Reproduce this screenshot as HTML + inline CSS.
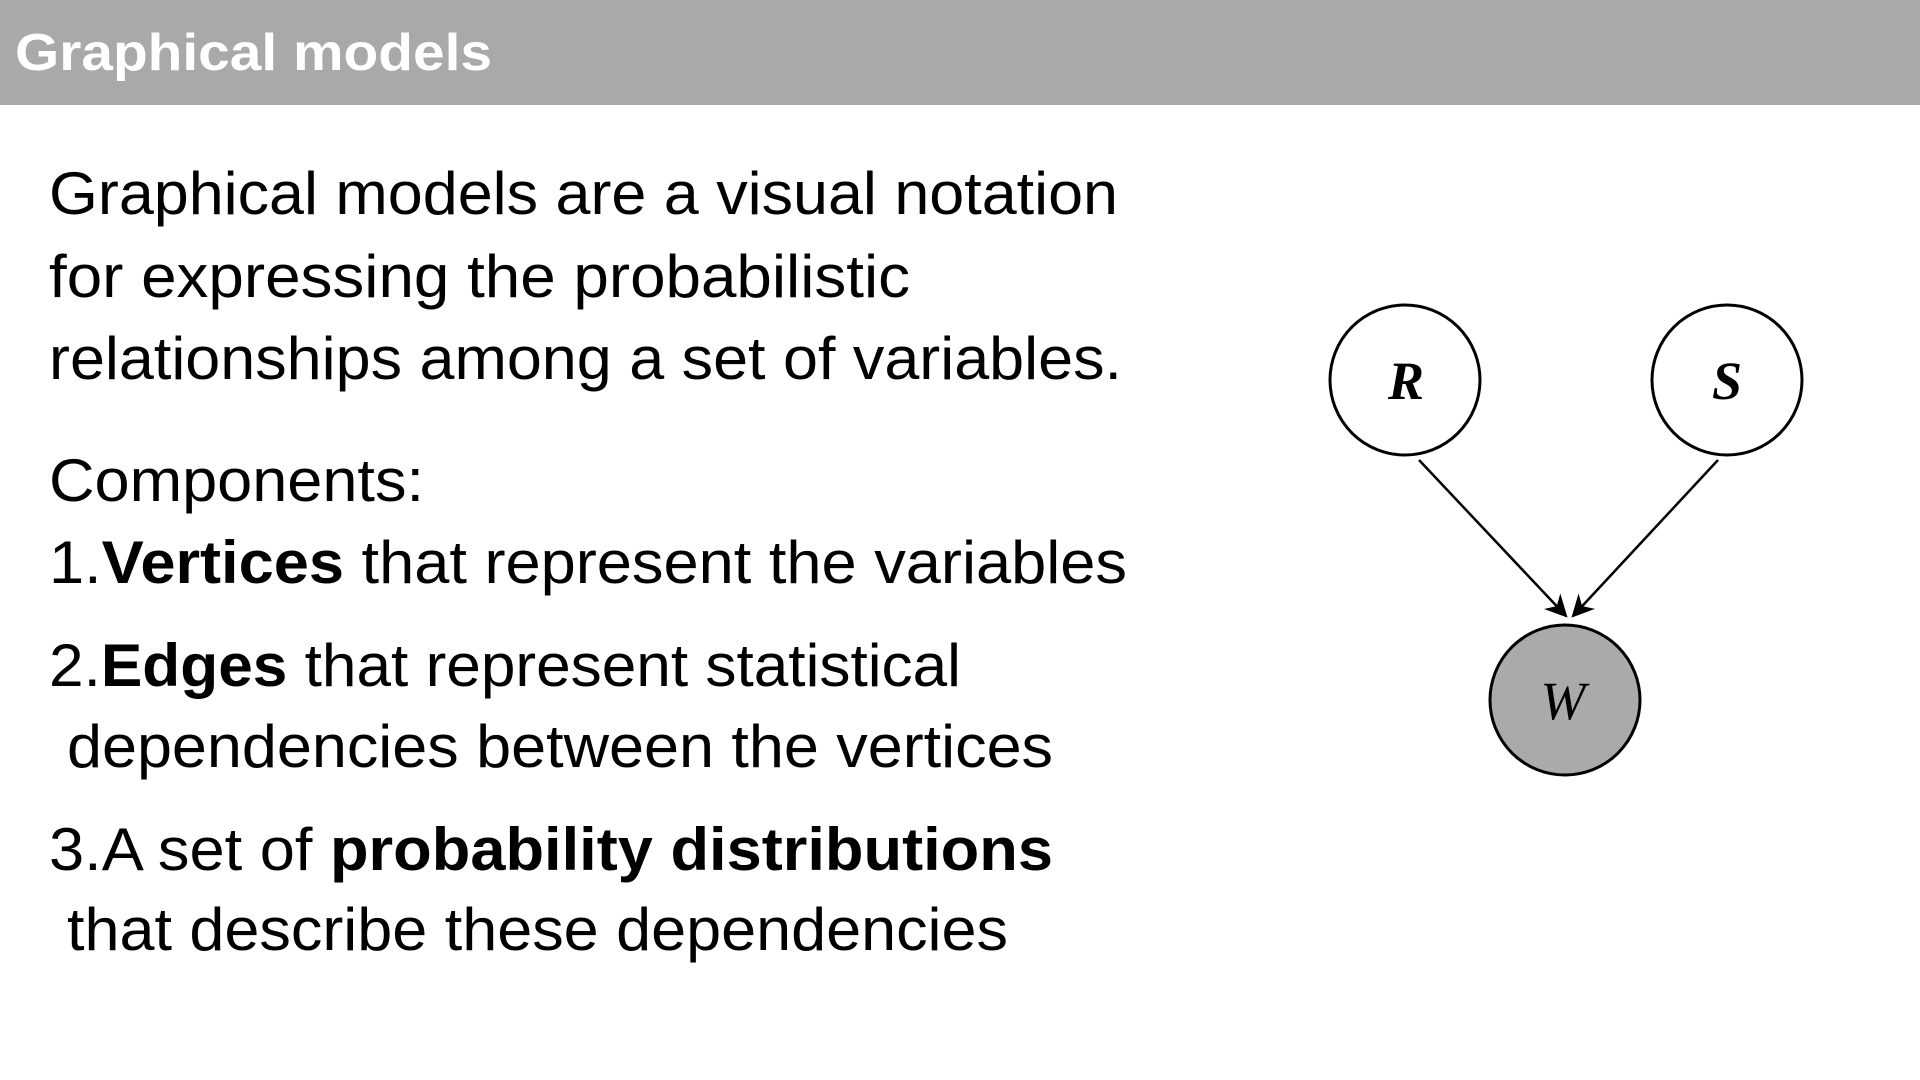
<!DOCTYPE html>
<html><head><meta charset="utf-8"><style>
html,body{margin:0;padding:0;background:#fff;width:1920px;height:1080px;overflow:hidden}
svg{display:block}
text{font-family:"Liberation Sans",sans-serif;fill:#000}
</style></head><body>
<svg width="1920" height="1080" viewBox="0 0 1920 1080" xmlns="http://www.w3.org/2000/svg">
<defs><marker id="ah" viewBox="0 0 10 10" refX="9" refY="5" markerWidth="9" markerHeight="9" orient="auto"><path d="M0,0 L10,5 L0,10 L3,5 z" fill="#000"/></marker></defs>
<rect x="0" y="0" width="1920" height="105" fill="#a9a9a9"/>
<text x="15" y="70" font-size="52" font-weight="bold" style="fill:#fff" textLength="477" lengthAdjust="spacingAndGlyphs">Graphical models</text>
<g font-size="60">
<text x="49" y="214" textLength="1069" lengthAdjust="spacingAndGlyphs">Graphical models are a visual notation</text>
<text x="49" y="297" textLength="861" lengthAdjust="spacingAndGlyphs">for expressing the probabilistic</text>
<text x="49" y="379" textLength="1073" lengthAdjust="spacingAndGlyphs">relationships among a set of variables.</text>
<text x="49" y="501" textLength="375" lengthAdjust="spacingAndGlyphs">Components:</text>
<text x="49" y="583" textLength="1078" lengthAdjust="spacingAndGlyphs">1.<tspan font-weight="bold">Vertices</tspan> that represent the variables</text>
<text x="49" y="686" textLength="912" lengthAdjust="spacingAndGlyphs">2.<tspan font-weight="bold">Edges</tspan> that represent statistical</text>
<text x="67" y="767" textLength="986" lengthAdjust="spacingAndGlyphs">dependencies between the vertices</text>
<text x="49" y="870" textLength="1004" lengthAdjust="spacingAndGlyphs">3.A set of <tspan font-weight="bold">probability distributions</tspan></text>
<text x="67" y="950" textLength="941" lengthAdjust="spacingAndGlyphs">that describe these dependencies</text>
</g>
<circle cx="1405" cy="380" r="75" fill="#fff" stroke="#000" stroke-width="3"/>
<circle cx="1727" cy="380" r="75" fill="#fff" stroke="#000" stroke-width="3"/>
<circle cx="1565" cy="700" r="75" fill="#aaa" stroke="#000" stroke-width="3"/>
<g font-style="italic" font-weight="bold" font-size="54" text-anchor="middle">
<text x="1406" y="399" style="font-family:'Liberation Serif',serif">R</text>
<text x="1727" y="399" style="font-family:'Liberation Serif',serif">S</text>
<text x="1563" y="719" style="font-family:'Liberation Serif',serif;font-weight:normal">W</text>
</g>
<line x1="1419" y1="460" x2="1566" y2="616" stroke="#000" stroke-width="2.5" marker-end="url(#ah)"/>
<line x1="1718" y1="460" x2="1573" y2="616" stroke="#000" stroke-width="2.5" marker-end="url(#ah)"/>
</svg>
</body></html>
